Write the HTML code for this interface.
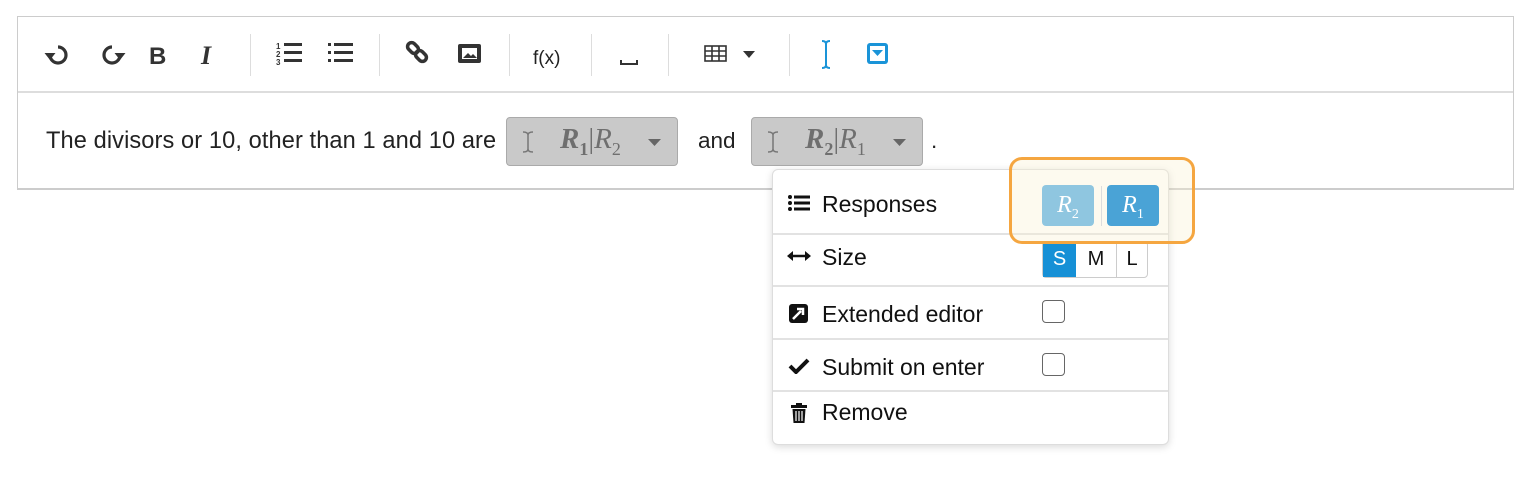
<!DOCTYPE html>
<html><head><style>
body{margin:0;width:1530px;height:490px;background:#fff;font-family:"Liberation Sans",Arial,sans-serif;position:relative;overflow:hidden;color:#222}
.abs{position:absolute}
.box{left:17px;top:16px;width:1497px;height:174px;border:1px solid #ccc;border-bottom:2px solid #ccc;box-sizing:border-box}
.tb{left:18px;top:17px;width:1495px;height:74px;border-bottom:2px solid #ddd}
.sep{position:absolute;top:34px;width:1px;height:42px;background:#ddd}
.chip{position:absolute;top:117px;height:49px;background:#c9c9c9;border:1px solid #aaa;border-radius:4px;box-sizing:border-box;font-family:"Liberation Serif",serif;font-style:italic;color:#6f6f6f;font-size:29px}
.pop{left:772px;top:169px;width:397px;height:276px;border:1px solid #ddd;border-radius:6px;background:#fff;box-shadow:0 2px 8px rgba(0,0,0,.15);box-sizing:border-box}
.row{position:absolute;left:0;width:395px;border-bottom:2px solid #e2e2e2;font-size:23px;color:#111}
.row span{position:absolute;left:49px}
.cb{position:absolute;left:269px;width:23px;height:23px;border:1.5px solid #666;border-radius:4px;box-sizing:border-box}
.txt{font-size:22.5px;color:#222}
sub{font-style:normal;font-size:18px}
</style></head><body>
<div class="abs box"></div>
<div class="abs tb"></div>
<svg class="abs" style="left:0;top:0" width="1000" height="92">
<g fill="none" stroke="#333" stroke-width="3.2">
<path d="M58 47 A8 8 0 1 1 50 55"/><path d="M112 47 A8 8 0 1 0 120 55"/>
</g>
<path d="M44.5 53 h11 l-5.5 7z" fill="#333"/><path d="M114.5 53 h11 l-5.5 7z" fill="#333"/>
<text x="149" y="64" font-family="Liberation Sans" font-weight="bold" font-size="24" fill="#333">B</text>
<text x="201" y="64" font-family="Liberation Serif" font-style="italic" font-weight="bold" font-size="26" fill="#333">I</text>
<g fill="#333"><text x="276" y="49" font-size="8" font-weight="bold">1</text><text x="276" y="57" font-size="8" font-weight="bold">2</text><text x="276" y="65" font-size="8" font-weight="bold">3</text>
<rect x="284" y="43" width="18" height="3"/><rect x="284" y="51" width="18" height="3"/><rect x="284" y="59" width="18" height="3"/>
<rect x="328" y="43" width="3" height="3"/><rect x="328" y="51" width="3" height="3"/><rect x="328" y="59" width="3" height="3"/>
<rect x="334" y="43" width="19" height="3"/><rect x="334" y="51" width="19" height="3"/><rect x="334" y="59" width="19" height="3"/></g>
<g fill="none" stroke="#333" stroke-width="3.5"><rect x="407" y="44" width="12" height="8" rx="4" transform="rotate(45 413 48)"/><rect x="415" y="52" width="12" height="8" rx="4" transform="rotate(45 421 56)"/></g>
<rect x="458" y="44" width="23" height="19" rx="2" fill="#333"/><rect x="462" y="48" width="15" height="11" fill="#fff"/><path d="M463 58 l5 -5 l3 3 l2 -2 l4 4z" fill="#333"/>
<text x="533" y="64" font-family="Liberation Sans" font-size="19" fill="#222">f(x)</text>
<path d="M621 60 v4 h16 v-4" fill="none" stroke="#333" stroke-width="2"/>
<g fill="none" stroke="#333" stroke-width="1.6"><rect x="705" y="46" width="21" height="15"/><path d="M705 51h21M705 56h21M712 46v15M719 46v15"/></g>
<path d="M743 51h12l-6 7z" fill="#333"/>
<g fill="none" stroke="#1a94d8" stroke-width="2"><path d="M826 42v25M822 41q4 0 4 3q0 -3 4 -3M822 68q4 0 4 -3q0 3 4 3"/></g>
<rect x="867" y="43" width="21" height="21" rx="3" fill="#1a94d8"/><rect x="870" y="46" width="15" height="15" fill="#fff"/><path d="M872 50h11l-5.5 6z" fill="#1a94d8"/>
</svg>
<div class="sep" style="left:250px"></div><div class="sep" style="left:379px"></div><div class="sep" style="left:509px"></div><div class="sep" style="left:591px"></div><div class="sep" style="left:668px"></div><div class="sep" style="left:789px"></div>
<div class="abs txt" style="left:46px;top:128px;font-size:23.6px;letter-spacing:0.1px">The divisors or 10, other than 1 and 10 are</div>
<div class="abs txt" style="left:698px;top:128px">and</div>
<div class="abs txt" style="left:931px;top:128px">.</div>
<div class="chip" style="left:506px;width:172px"><svg class="abs" style="left:14px;top:12px" width="14" height="24"><path d="M7 3v18M2 2q5 0 5 3q0 -3 5 -3M2 22q5 0 5 -3q0 3 5 3" fill="none" stroke="#777" stroke-width="1.5"/></svg><span class="abs" style="left:53px;top:5px;white-space:nowrap"><b>R</b><sub><b>1</b></sub><span style="font-style:normal">|</span>R<sub>2</sub></span><svg class="abs" style="left:141px;top:21px" width="14" height="9"><path d="M0 0h13l-6.5 7z" fill="#666"/></svg></div>
<div class="chip" style="left:751px;width:172px"><svg class="abs" style="left:14px;top:12px" width="14" height="24"><path d="M7 3v18M2 2q5 0 5 3q0 -3 5 -3M2 22q5 0 5 -3q0 3 5 3" fill="none" stroke="#777" stroke-width="1.5"/></svg><span class="abs" style="left:53px;top:5px;white-space:nowrap"><b>R</b><sub><b>2</b></sub><span style="font-style:normal">|</span>R<sub>1</sub></span><svg class="abs" style="left:141px;top:21px" width="14" height="9"><path d="M0 0h13l-6.5 7z" fill="#666"/></svg></div>
<div class="abs pop">
<div class="row" style="top:0;height:63px"><svg class="abs" style="left:15px;top:25px" width="22" height="16" fill="#111"><rect x="0" y="0" width="4" height="4" rx="2"/><rect x="0" y="6" width="4" height="4" rx="2"/><rect x="0" y="12" width="4" height="4" rx="2"/><rect x="6" y="0.5" width="16" height="3"/><rect x="6" y="6.5" width="16" height="3"/><rect x="6" y="12.5" width="16" height="3"/></svg><span style="top:21px">Responses</span></div>
<div class="row" style="top:63px;height:52px"><svg class="abs" style="left:14px;top:17px" width="24" height="12"><path d="M5 6h14" stroke="#111" stroke-width="2.5"/><path d="M0 6l6 -5v10zM24 6l-6 -5v10z" fill="#111"/></svg><span style="top:11px">Size</span>
<div class="abs" style="left:269px;top:8px;width:106px;height:37px;border:1px solid #ccc;border-radius:4px;box-sizing:border-box;font-size:20px"><div class="abs" style="left:0;top:0;width:33px;height:35px;background:#1690d6;color:#fff;text-align:center;line-height:35px">S</div><div class="abs" style="left:33px;top:0;width:40px;height:35px;border-right:1px solid #ccc;text-align:center;line-height:35px">M</div><div class="abs" style="left:74px;top:0;width:30px;text-align:center;line-height:35px">L</div></div></div>
<div class="row" style="top:115px;height:53px"><svg class="abs" style="left:16px;top:19px" width="19" height="19"><rect width="19" height="19" rx="3" fill="#111"/><path d="M4 15l8 -8M8 5h6v6" stroke="#fff" stroke-width="2.5" fill="none"/></svg><span style="top:16px">Extended editor</span><div class="cb" style="top:15px"></div></div>
<div class="row" style="top:168px;height:52px"><svg class="abs" style="left:15px;top:20px" width="22" height="16"><path d="M2 8l6 6l12 -12" stroke="#111" stroke-width="4" fill="none"/></svg><span style="top:16px">Submit on enter</span><div class="cb" style="top:15px"></div></div>
<div class="row" style="top:220px;height:54px;border:none"><svg class="abs" style="left:18px;top:13px" width="16" height="20" fill="#111"><rect x="0" y="2" width="16" height="3"/><rect x="5" y="0" width="6" height="3"/><path d="M1.5 6h13l-1 14h-11z"/><path d="M5 8v10M8 8v10M11 8v10" stroke="#fff" stroke-width="1.2"/></svg><span style="top:9px">Remove</span></div>
</div>
<div class="abs" style="left:1009px;top:157px;width:186px;height:87px;border:3px solid #f5a640;border-radius:13px;background:rgba(250,240,210,.35);box-sizing:border-box"></div>
<div class="abs" style="left:1042px;top:185px;width:52px;height:41px;background:#8fc6e0;border-radius:4px;color:#fff;font-family:'Liberation Serif',serif;font-style:italic;font-size:24px;text-align:center;line-height:40px">R<sub style="font-size:14px">2</sub></div>
<div class="abs" style="left:1101px;top:186px;width:1px;height:40px;background:#ddd"></div>
<div class="abs" style="left:1107px;top:185px;width:52px;height:41px;background:#4aa3d6;border-radius:4px;color:#fff;font-family:'Liberation Serif',serif;font-style:italic;font-size:24px;text-align:center;line-height:40px">R<sub style="font-size:14px">1</sub></div>
</body></html>
